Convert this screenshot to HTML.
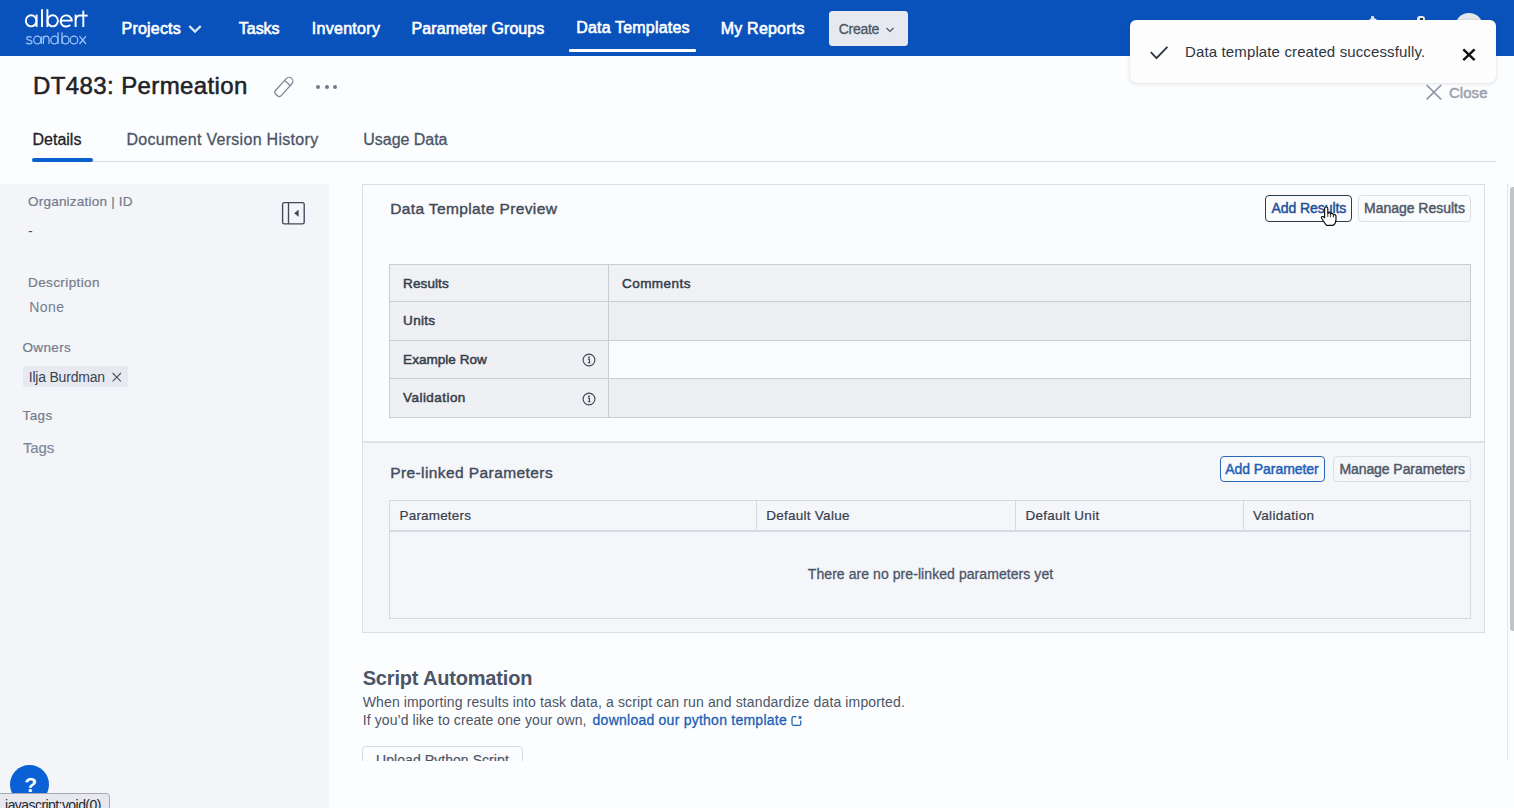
<!DOCTYPE html>
<html><head><meta charset="utf-8"><style>
html,body{margin:0;padding:0;width:1514px;height:808px;overflow:hidden;background:#fbfcfd;position:relative}
body{font-family:"Liberation Sans",sans-serif}
.t{position:absolute;white-space:nowrap;line-height:1}
</style></head><body>
<div style="position:absolute;left:0px;top:0px;width:1514px;height:808px;background:#fcfdfe"></div>
<div style="position:absolute;left:0px;top:184px;width:329px;height:624px;background:#f4f5f9"></div>
<div style="position:absolute;left:0px;top:0px;width:1514px;height:56px;background:#0a52bb"></div>
<svg style="position:absolute;left:0;top:0" width="100" height="56" viewBox="0 0 100 56">
<g fill="none" stroke="#fff" stroke-width="1.9" stroke-linecap="butt">
<ellipse cx="31.1" cy="20.8" rx="5.3" ry="5.6"/><line x1="36.6" y1="14.6" x2="36.6" y2="27"/>
<line x1="42" y1="9.2" x2="42" y2="27"/>
<line x1="47.4" y1="9.2" x2="47.4" y2="27"/><ellipse cx="52.7" cy="20.8" rx="5.2" ry="5.6"/>
<path d="M60.7 20.6 H71.8 A5.6 5.6 0 1 0 70.2 24.9"/>
<line x1="75.6" y1="14.6" x2="75.6" y2="27"/><path d="M75.6 20 A5.5 5.5 0 0 1 80.8 15.2"/>
<line x1="83.3" y1="10.6" x2="83.3" y2="27"/><line x1="80.6" y1="15.6" x2="87.7" y2="15.6"/>
</g>
<g fill="none" stroke="#a3c6fb" stroke-width="1.2">
<path d="M31.6 37.6 C30.5 36.3 26.6 36.2 26.6 38.3 C26.6 40.6 32 39.6 32 42 C32 44.4 27.4 44.3 26.2 42.6"/>
<ellipse cx="37.3" cy="40.1" rx="3.6" ry="3.9"/><line x1="41.3" y1="36.2" x2="41.3" y2="44"/>
<line x1="43.4" y1="36.2" x2="43.4" y2="44"/><path d="M43.4 40 C43.4 37 44.8 36.2 46.3 36.2 C47.8 36.2 49 37 49 39.5 V44"/>
<ellipse cx="54.4" cy="40.1" rx="3.6" ry="3.9"/><line x1="58.1" y1="32.3" x2="58.1" y2="44"/>
<line x1="62" y1="32.3" x2="62" y2="44"/><ellipse cx="65.6" cy="40.1" rx="3.5" ry="3.9"/>
<ellipse cx="74" cy="40.1" rx="3.8" ry="3.9"/>
<line x1="79.5" y1="36.2" x2="86" y2="44"/><line x1="86" y1="36.2" x2="79.5" y2="44"/>
</g></svg>
<div class="t" style="left:121.60px;top:20.66px;font-size:16px;font-weight:normal;color:#ffffff;letter-spacing:0.193px;-webkit-text-stroke:0.6px #ffffff;">Projects</div>
<svg style="position:absolute;left:186px;top:22px" width="18" height="14"><polyline points="3.3,4 9,9.6 14.7,4" fill="none" stroke="#dae6f7" stroke-width="2.3"/></svg>
<div class="t" style="left:238.80px;top:20.66px;font-size:16px;font-weight:normal;color:#ffffff;letter-spacing:-0.025px;-webkit-text-stroke:0.6px #ffffff;">Tasks</div>
<div class="t" style="left:311.70px;top:20.66px;font-size:16px;font-weight:normal;color:#ffffff;letter-spacing:0.306px;-webkit-text-stroke:0.6px #ffffff;">Inventory</div>
<div class="t" style="left:411.60px;top:20.66px;font-size:16px;font-weight:normal;color:#ffffff;letter-spacing:0.073px;-webkit-text-stroke:0.6px #ffffff;">Parameter Groups</div>
<div class="t" style="left:576.20px;top:19.76px;font-size:16px;font-weight:normal;color:#ffffff;letter-spacing:0.185px;-webkit-text-stroke:0.6px #ffffff;">Data Templates</div>
<div style="position:absolute;left:569px;top:49px;width:127px;height:3px;background:#fff;border-radius:1px"></div>
<div class="t" style="left:720.70px;top:20.66px;font-size:16px;font-weight:normal;color:#ffffff;letter-spacing:0.217px;-webkit-text-stroke:0.6px #ffffff;">My Reports</div>
<div style="position:absolute;left:829px;top:11px;width:79px;height:35px;background:#e6e9ef;border-radius:3.5px"></div>
<div class="t" style="left:838.70px;top:22.35px;font-size:14px;font-weight:normal;color:#4b5563;letter-spacing:-0.280px;-webkit-text-stroke:0.3px #4b5563;">Create</div>
<svg style="position:absolute;left:884px;top:25px" width="12" height="10"><polyline points="2.5,3 6,6.5 9.5,3" fill="none" stroke="#4b5563" stroke-width="1.2"/></svg>
<div style="position:absolute;left:1367.5px;top:17.6px;width:10.5px;height:6px;border-radius:5px 5px 0 0;background:#e8eef8"></div>
<div style="position:absolute;left:1370.8px;top:15.8px;width:3.4px;height:3px;border-radius:1px;background:#dfe8f6"></div>
<div style="position:absolute;left:1417.4px;top:16px;width:8px;height:6px;border-radius:3px 3px 0 0;background:#e8eef8"></div>
<div style="position:absolute;left:1420px;top:18.4px;width:3px;height:1.6px;background:#334"></div>
<div style="position:absolute;left:1455px;top:13px;width:28px;height:28px;border-radius:50%;background:#e4e6ea"></div>
<div class="t" style="left:33.00px;top:74.08px;font-size:24px;font-weight:normal;color:#1f2328;letter-spacing:0.394px;-webkit-text-stroke:0.55px #1f2328;">DT483: Permeation</div>
<svg style="position:absolute;left:265px;top:70px" width="40" height="35" viewBox="265 70 40 35">
<g transform="translate(276.6,95) rotate(-48)" fill="none" stroke="#7d8594" stroke-width="1.25" stroke-linejoin="round">
<path d="M2.6 -3.8 H18.6 A3.8 3.8 0 0 1 18.6 3.8 H2.6 Q0 3.8 0 1.2 V-1.2 Q0 -3.8 2.6 -3.8 Z M16.2 -3.8 V3.8"/></g></svg>
<div style="position:absolute;left:316px;top:85.2px;width:4px;height:4px;border-radius:50%;background:#737b8a"></div>
<div style="position:absolute;left:324.6px;top:85.2px;width:4px;height:4px;border-radius:50%;background:#737b8a"></div>
<div style="position:absolute;left:333.2px;top:85.2px;width:4px;height:4px;border-radius:50%;background:#737b8a"></div>
<svg style="position:absolute;left:1424px;top:83px" width="20" height="19"><path d="M2.6 2 L17.2 16.4 M17.2 2 L2.6 16.4" stroke="#8a92a0" stroke-width="1.5"/></svg>
<div class="t" style="left:1449.00px;top:85.30px;font-size:15px;font-weight:normal;color:#9aa1ad;letter-spacing:0.038px;-webkit-text-stroke:0.5px #9aa1ad;">Close</div>
<div style="position:absolute;left:32px;top:161px;width:1464px;height:1px;background:#d6dae1"></div>
<div class="t" style="left:32.50px;top:131.76px;font-size:16px;font-weight:normal;color:#1f2328;letter-spacing:0.000px;-webkit-text-stroke:0.3px #1f2328;">Details</div>
<div class="t" style="left:126.40px;top:131.76px;font-size:16px;font-weight:normal;color:#4b5567;letter-spacing:0.296px;-webkit-text-stroke:0.3px #4b5567;">Document Version History</div>
<div class="t" style="left:363.30px;top:131.76px;font-size:16px;font-weight:normal;color:#4b5567;letter-spacing:-0.033px;-webkit-text-stroke:0.3px #4b5567;">Usage Data</div>
<div style="position:absolute;left:32px;top:158px;width:61px;height:4px;background:#0a5fd1;border-radius:2px"></div>
<div class="t" style="left:28.00px;top:194.57px;font-size:13.5px;font-weight:normal;color:#737c8c;letter-spacing:0.219px;-webkit-text-stroke:0.22px #737c8c;">Organization | ID</div>
<div class="t" style="left:28.00px;top:223.65px;font-size:14px;font-weight:normal;color:#4b5563;letter-spacing:0.000px;">-</div>
<svg style="position:absolute;left:280px;top:200px" width="27" height="26" viewBox="0 0 27 26">
<rect x="2.6" y="2.6" width="21.6" height="21.3" rx="1.7" fill="none" stroke="#414856" stroke-width="1.35"/>
<line x1="8.5" y1="2.6" x2="8.5" y2="23.9" stroke="#414856" stroke-width="1.35"/>
<path d="M18.6 9.8 L14.2 13.3 L18.6 16.8 Z" fill="#414856"/></svg>
<div class="t" style="left:28.00px;top:275.87px;font-size:13.5px;font-weight:normal;color:#737c8c;letter-spacing:0.400px;-webkit-text-stroke:0.22px #737c8c;">Description</div>
<div class="t" style="left:29.20px;top:300.15px;font-size:14px;font-weight:normal;color:#737c8c;letter-spacing:0.433px;">None</div>
<div class="t" style="left:22.50px;top:340.67px;font-size:13.5px;font-weight:normal;color:#737c8c;letter-spacing:0.340px;-webkit-text-stroke:0.22px #737c8c;">Owners</div>
<div style="position:absolute;left:23px;top:366px;width:105px;height:21px;background:#e6e9f0;border-radius:2px"></div>
<div class="t" style="left:28.70px;top:370.35px;font-size:14px;font-weight:normal;color:#3b4352;letter-spacing:-0.200px;">Ilja Burdman</div>
<svg style="position:absolute;left:110px;top:371px" width="14" height="14"><path d="M2.6 2 L10.9 10.4 M10.9 2 L2.6 10.4" stroke="#4b525f" stroke-width="1.1"/></svg>
<div class="t" style="left:22.50px;top:409.17px;font-size:13.5px;font-weight:normal;color:#737c8c;letter-spacing:0.433px;-webkit-text-stroke:0.22px #737c8c;">Tags</div>
<div class="t" style="left:23.00px;top:440.30px;font-size:15px;font-weight:normal;color:#7f8899;letter-spacing:-0.150px;-webkit-text-stroke:0.2px #7f8899;">Tags</div>
<div style="position:absolute;left:362px;top:184px;width:1123px;height:449px;background:#fbfcfd;border:1px solid #d9dde4;box-sizing:border-box"></div>
<div style="position:absolute;left:363px;top:441px;width:1121px;height:191px;background:#f4f6fa;border-top:2px solid #dde1e7;box-sizing:border-box"></div>
<div class="t" style="left:390.20px;top:200.68px;font-size:15.5px;font-weight:normal;color:#434a59;letter-spacing:0.378px;-webkit-text-stroke:0.4px #434a59;">Data Template Preview</div>
<div style="position:absolute;left:1265px;top:195px;width:87px;height:27px;background:#fbfcfd;border:1px solid #2b3b52;border-radius:4px;box-sizing:border-box"></div>
<div class="t" style="left:1271.50px;top:200.85px;font-size:14px;font-weight:normal;color:#1d4f98;letter-spacing:-0.070px;-webkit-text-stroke:0.45px #1d4f98;">Add Results</div>
<div style="position:absolute;left:1358px;top:195px;width:113px;height:27px;background:#fbfcfd;border:1px solid #dadee5;border-radius:4px;box-sizing:border-box"></div>
<div class="t" style="left:1364.00px;top:200.85px;font-size:14px;font-weight:normal;color:#4f5868;letter-spacing:-0.019px;-webkit-text-stroke:0.45px #4f5868;">Manage Results</div>
<div style="position:absolute;left:389px;top:264px;width:1082px;height:154px;background:#eceef2;border:1px solid #c8ccd3;box-sizing:border-box"></div>
<div style="position:absolute;left:390px;top:265px;width:1080px;height:36px;background:#eff1f5"></div>
<div style="position:absolute;left:609px;top:340px;width:861px;height:38px;background:#fafbfc"></div>
<div style="position:absolute;left:390px;top:301px;width:1080px;height:1px;background:#c8ccd3"></div>
<div style="position:absolute;left:390px;top:340px;width:1080px;height:1px;background:#c8ccd3"></div>
<div style="position:absolute;left:390px;top:378px;width:1080px;height:1px;background:#c8ccd3"></div>
<div style="position:absolute;left:608px;top:265px;width:1px;height:152px;background:#c8ccd3"></div>
<div style="position:absolute;left:390px;top:302px;width:218px;height:115px;background:#eef0f4"></div>
<div style="position:absolute;left:390px;top:341px;width:218px;height:37px;background:#eef0f4"></div>
<div style="position:absolute;left:390px;top:302px;width:218px;height:1px"></div>
<div style="position:absolute;left:390px;top:340px;width:1080px;height:1px;background:#c8ccd3"></div>
<div style="position:absolute;left:390px;top:378px;width:1080px;height:1px;background:#c8ccd3"></div>
<div class="t" style="left:403.10px;top:276.77px;font-size:13.5px;font-weight:normal;color:#363e4b;letter-spacing:0.100px;-webkit-text-stroke:0.5px #363e4b;">Results</div>
<div class="t" style="left:621.90px;top:276.77px;font-size:13.5px;font-weight:normal;color:#363e4b;letter-spacing:0.493px;-webkit-text-stroke:0.5px #363e4b;">Comments</div>
<div class="t" style="left:403.10px;top:313.87px;font-size:13.5px;font-weight:normal;color:#363e4b;letter-spacing:0.287px;-webkit-text-stroke:0.5px #363e4b;">Units</div>
<div class="t" style="left:403.10px;top:352.97px;font-size:13.5px;font-weight:normal;color:#363e4b;letter-spacing:0.040px;-webkit-text-stroke:0.5px #363e4b;">Example Row</div>
<div class="t" style="left:403.10px;top:391.07px;font-size:13.5px;font-weight:normal;color:#363e4b;letter-spacing:0.439px;-webkit-text-stroke:0.5px #363e4b;">Validation</div>
<svg style="position:absolute;left:581px;top:351.9px" width="16" height="16" viewBox="0 0 16 16">
<circle cx="8" cy="8" r="5.9" fill="none" stroke="#3d4452" stroke-width="1.1"/>
<circle cx="8" cy="5.2" r="0.85" fill="#3d4452"/><path d="M6.9 7.1 H8.4 V10.6 M6.8 10.7 H9.4" fill="none" stroke="#3d4452" stroke-width="1.1"/></svg>
<svg style="position:absolute;left:581px;top:390.8px" width="16" height="16" viewBox="0 0 16 16">
<circle cx="8" cy="8" r="5.9" fill="none" stroke="#3d4452" stroke-width="1.1"/>
<circle cx="8" cy="5.2" r="0.85" fill="#3d4452"/><path d="M6.9 7.1 H8.4 V10.6 M6.8 10.7 H9.4" fill="none" stroke="#3d4452" stroke-width="1.1"/></svg>
<div class="t" style="left:390.20px;top:465.08px;font-size:15.5px;font-weight:normal;color:#434a59;letter-spacing:0.413px;-webkit-text-stroke:0.4px #434a59;">Pre-linked Parameters</div>
<div style="position:absolute;left:1220px;top:456px;width:105px;height:26px;background:#f8fafc;border:1px solid #2a68bd;border-radius:4px;box-sizing:border-box"></div>
<div class="t" style="left:1225.30px;top:462.15px;font-size:14px;font-weight:normal;color:#2160b6;letter-spacing:-0.062px;-webkit-text-stroke:0.45px #2160b6;">Add Parameter</div>
<div style="position:absolute;left:1333px;top:456px;width:138px;height:26px;background:#f4f6fa;border:1px solid #dadee5;border-radius:4px;box-sizing:border-box"></div>
<div class="t" style="left:1339.40px;top:462.15px;font-size:14px;font-weight:normal;color:#4f5868;letter-spacing:-0.072px;-webkit-text-stroke:0.45px #4f5868;">Manage Parameters</div>
<div style="position:absolute;left:389px;top:500px;width:1082px;height:119px;background:#f4f6fa;border:1px solid #d5d9e1;box-sizing:border-box"></div>
<div style="position:absolute;left:390px;top:530px;width:1080px;height:2px;background:#d5d9e1"></div>
<div style="position:absolute;left:756px;top:501px;width:1px;height:29px;background:#d5d9e1"></div>
<div style="position:absolute;left:1015px;top:501px;width:1px;height:29px;background:#d5d9e1"></div>
<div style="position:absolute;left:1243px;top:501px;width:1px;height:29px;background:#d5d9e1"></div>
<div class="t" style="left:399.50px;top:508.77px;font-size:13.5px;font-weight:normal;color:#363e4b;letter-spacing:0.183px;-webkit-text-stroke:0.2px #363e4b;">Parameters</div>
<div class="t" style="left:766.20px;top:508.77px;font-size:13.5px;font-weight:normal;color:#363e4b;letter-spacing:0.267px;-webkit-text-stroke:0.2px #363e4b;">Default Value</div>
<div class="t" style="left:1025.40px;top:508.77px;font-size:13.5px;font-weight:normal;color:#363e4b;letter-spacing:0.300px;-webkit-text-stroke:0.2px #363e4b;">Default Unit</div>
<div class="t" style="left:1253.00px;top:508.77px;font-size:13.5px;font-weight:normal;color:#363e4b;letter-spacing:0.294px;-webkit-text-stroke:0.2px #363e4b;">Validation</div>
<div class="t" style="left:807.80px;top:567.35px;font-size:14px;font-weight:normal;color:#4b5567;letter-spacing:0.070px;-webkit-text-stroke:0.3px #4b5567;">There are no pre-linked parameters yet</div>
<div class="t" style="left:362.70px;top:668.17px;font-size:20px;font-weight:bold;color:#4b5567;letter-spacing:-0.181px;">Script Automation</div>
<div class="t" style="left:362.70px;top:694.75px;font-size:14px;font-weight:normal;color:#4b5567;letter-spacing:0.134px;">When importing results into task data, a script can run and standardize data imported.</div>
<div class="t" style="left:362.70px;top:712.65px;font-size:14px;font-weight:normal;color:#4b5567;letter-spacing:0.099px;">If you’d like to create one your own,</div>
<div class="t" style="left:592.60px;top:712.65px;font-size:14px;font-weight:normal;color:#1c5fb3;letter-spacing:0.241px;-webkit-text-stroke:0.3px #1c5fb3;">download our python template</div>
<svg style="position:absolute;left:789px;top:714px" width="14" height="14" viewBox="0 0 14 14">
<path d="M7.4 2.7 H4.5 Q3 2.7 3 4.2 V9.8 Q3 11.3 4.5 11.3 H10.3 Q11.8 11.3 11.8 9.8 V6.4" fill="none" stroke="#1c5fb3" stroke-width="1.25"/>
<path d="M9.4 2.7 H11.8 V5.1 M11.7 2.8 L9.8 4.7" fill="none" stroke="#1c5fb3" stroke-width="1.15"/></svg>
<div style="position:absolute;left:362px;top:746px;width:161px;height:15px;overflow:hidden"><div style="position:absolute;left:0;top:0;width:159px;height:30px;border:1px solid #d5d9e0;border-radius:4px;background:#fbfcfd"></div></div>
<div style="position:absolute;left:362px;top:746px;width:161px;height:15px;overflow:hidden">
<div class="t" style="left:14.00px;top:6.65px;font-size:14px;font-weight:normal;color:#4b5567;letter-spacing:0.066px;-webkit-text-stroke:0.2px #4b5567;">Upload Python Script</div>
</div>
<div style="position:absolute;left:1507px;top:184px;width:1px;height:577px;background:#e3e5e9"></div>
<div style="position:absolute;left:1510px;top:187px;width:6px;height:444px;background:#c3c4c7;border-radius:3px 0 0 3px"></div>
<div style="position:absolute;left:1130px;top:20px;width:366px;height:63px;background:#fdfdfe;border-radius:6px;box-shadow:0 1px 4px rgba(30,40,60,0.10),0 0 1px rgba(30,40,60,0.25)"></div>
<svg style="position:absolute;left:1148px;top:44.3px" width="22" height="18"><polyline points="2.8,8.2 8.5,14.1 19.4,2.9" fill="none" stroke="#2f3743" stroke-width="1.9"/></svg>
<div class="t" style="left:1185.00px;top:43.50px;font-size:15px;font-weight:normal;color:#2d3440;letter-spacing:0.131px;">Data template created successfully.</div>
<svg style="position:absolute;left:1460px;top:46px" width="18" height="17"><path d="M3.3 3.3 L14.6 14.2 M14.6 3.3 L3.3 14.2" stroke="#111" stroke-width="2.4"/></svg>
<svg style="position:absolute;left:1315px;top:200px" width="30" height="30" viewBox="1315 200 30 30">
<path d="M1324.6 217.8 V208.6 Q1324.6 207 1326.2 207 Q1327.8 207 1327.8 208.6 V213.6 Q1328 212.6 1329.2 212.6 Q1330.5 212.6 1330.6 214 Q1330.9 213.3 1332 213.4 Q1333.3 213.6 1333.4 214.9 Q1333.8 214.4 1334.7 214.6 Q1336 214.9 1336 216.3 V219.5 Q1336 223.5 1333.2 225.3 H1326.5 Q1325 223.6 1323.4 221 L1321.6 218.3 Q1321 217.1 1322.1 216.6 Q1323.3 216.2 1324.6 217.8 Z" fill="#fff" stroke="#0d0d0d" stroke-width="1.15" stroke-linejoin="round"/>
<path d="M1327.8 213.6 V217 M1330.6 214 V217.2 M1333.4 214.9 V217.4" stroke="#0d0d0d" stroke-width="0.8"/></svg>
<div style="position:absolute;left:10px;top:765px;width:39px;height:39px;background:#0a60d5;border-radius:50%"></div>
<div class="t" style="left:24.20px;top:773.72px;font-size:21px;font-weight:bold;color:#fff;letter-spacing:0.000px;">?</div>
<div style="position:absolute;left:-1px;top:793px;width:111px;height:20px;background:#e6e8ee;border:1px solid #a4a9b2;border-radius:0 4px 0 0;box-sizing:border-box"></div>
<div class="t" style="left:5.10px;top:797.65px;font-size:14px;font-weight:normal;color:#22262e;letter-spacing:-0.562px;">javascript:void(0)</div>
</body></html>
